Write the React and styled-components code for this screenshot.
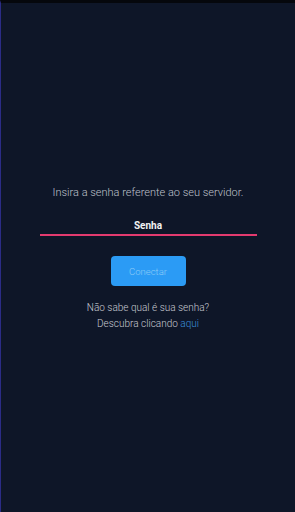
import React, { useState } from 'react'
import styled, { createGlobalStyle } from 'styled-components'

const GlobalStyle = createGlobalStyle`
  html, body { margin: 0; padding: 0; background: #0e1628; }
  * { box-sizing: border-box; }
`

const Screen = styled.div`
  width: 295px;
  height: 512px;
  background: #0e1628;
  border-top: 3px solid #05070c;
  border-left: 1px solid #2b2c86;
  font-family: Roboto, "Noto Sans", sans-serif;
  display: flex;
  flex-direction: column;
  align-items: center;
  padding-top: 182px;
`

const Prompt = styled.p`
  margin: 0;
  color: #bfc2cc;
  font-size: 11px;
  font-weight: 300;
  line-height: 16px;
`

const Field = styled.input`
  margin-top: 17px;
  width: 217px;
  height: 18px;
  background: transparent;
  border: none;
  border-bottom: 2px solid #e33a6f;
  color: #fff;
  text-align: center;
  font-family: inherit;
  font-size: 10px;
  font-weight: 700;
  outline: none;
  padding: 0 0 2px;
  &::placeholder { color: #f2f2f2; }
`

const Button = styled.button`
  margin-top: 20px;
  width: 75px;
  height: 30px;
  border: none;
  border-radius: 4px;
  background: #2b9bf5;
  color: #8ecbf7;
  font-family: inherit;
  font-size: 9.5px;
  font-weight: 300;
`

const Help = styled.div`
  margin-top: 15px;
  display: flex;
  flex-direction: column;
  align-items: center;
  gap: 2px;
  color: #c8cad2;
  font-size: 10px;
  font-weight: 300;
  line-height: 14px;
`

const Link = styled.a`
  color: #3b8fdc;
  text-decoration: none;
`

export default function App() {
  const [senha, setSenha] = useState('')
  return (
    <>
      <GlobalStyle />
      <Screen>
        <Prompt>Insira a senha referente ao seu servidor.</Prompt>
        <Field
          placeholder="Senha"
          type="password"
          value={senha}
          onChange={(e) => setSenha(e.target.value)}
        />
        <Button>Conectar</Button>
        <Help>
          <span>Não sabe qual é sua senha?</span>
          <span>Descubra clicando <Link href="#">aqui</Link></span>
        </Help>
      </Screen>
    </>
  )
}
